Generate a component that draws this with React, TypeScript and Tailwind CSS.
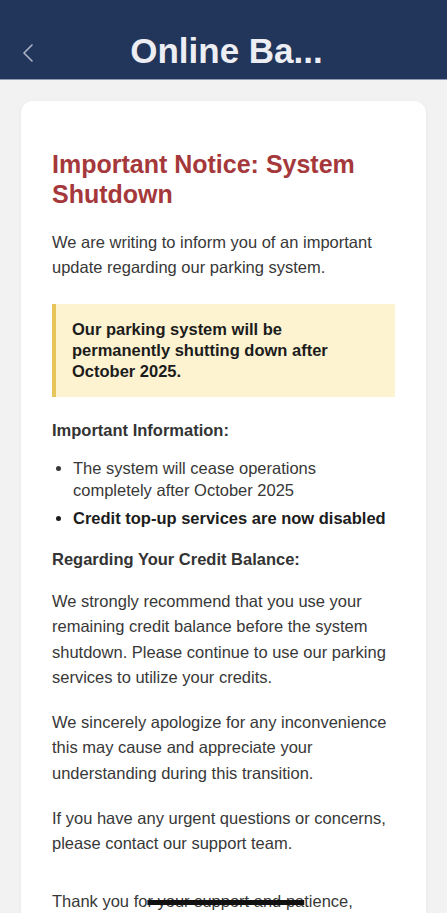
export default function App() {
  return (
    <div className="min-h-screen bg-[#f2f2f2] font-['Liberation_Sans',Arial,sans-serif]">
      <header className="relative flex h-[80px] justify-center border-b border-[#8e9ab0] bg-[#22355a] pt-[31px]">
        <button className="absolute left-[18px] top-[41px] flex h-[24px] w-[20px] items-center justify-center">
          <svg width="12" height="18" viewBox="0 0 12 18" fill="none">
            <polyline
              points="10,1 2,9 10,17"
              stroke="#aeb6c6"
              strokeWidth="1.6"
              strokeLinecap="round"
              strokeLinejoin="round"
            />
          </svg>
        </button>
        <h1 className="pl-[6px] text-[35px] font-bold leading-[40px] text-[#eceef3]">Online Ba...</h1>
      </header>

      <main className="px-[21px] pt-[21px]">
        <div className="rounded-[12px] bg-white px-[31px] pb-10 pt-[48px] shadow-[0_1px_4px_rgba(0,0,0,0.05)]">
          <h2 className="text-[25px] font-bold leading-[30px] text-[#a5383b]">
            Important Notice: System Shutdown
          </h2>

          <p className="mt-[21px] text-[16.5px] leading-[25px] text-[#383838]">
            We are writing to inform you of an important update regarding our parking system.
          </p>

          <div className="mt-[24px] border-l-4 border-[#e8c55a] bg-[#fdf3d0] py-[15px] pl-4 pr-4">
            <p className="text-[16.5px] font-bold leading-[21px] text-[#1c1c1c]">
              Our parking system will be permanently shutting down after October 2025.
            </p>
          </div>

          <h3 className="mt-[21px] text-[16.5px] font-bold leading-[25px] text-[#333]">
            Important Information:
          </h3>

          <ul className="mt-[14px] list-disc space-y-[6px] pl-[21px] text-[16.5px] leading-[22px] text-[#383838]">
            <li>The system will cease operations completely after October 2025</li>
            <li className="font-bold text-[#1c1c1c]">Credit top-up services are now disabled</li>
          </ul>

          <h3 className="mt-[18px] text-[16.5px] font-bold leading-[25px] text-[#333]">
            Regarding Your Credit Balance:
          </h3>

          <p className="mt-[17px] text-[16.5px] leading-[25.3px] text-[#383838]">
            We strongly recommend that you use your remaining credit balance before the system
            shutdown. Please continue to use our parking services to utilize your credits.
          </p>

          <p className="mt-[20px] text-[16.5px] leading-[25.3px] text-[#383838]">
            We sincerely apologize for any inconvenience this may cause and appreciate your
            understanding during this transition.
          </p>

          <p className="mt-[20px] text-[16.5px] leading-[25.3px] text-[#383838]">
            If you have any urgent questions or concerns, please contact our support team.
          </p>

          <p className="mt-[32px] text-[16.5px] leading-[25.3px] text-[#383838]">
            Thank you fo
            <span className="line-through decoration-[#111] decoration-[5px]">
              r your support and pa
            </span>
            tience,
          </p>
        </div>
      </main>
    </div>
  );
}
